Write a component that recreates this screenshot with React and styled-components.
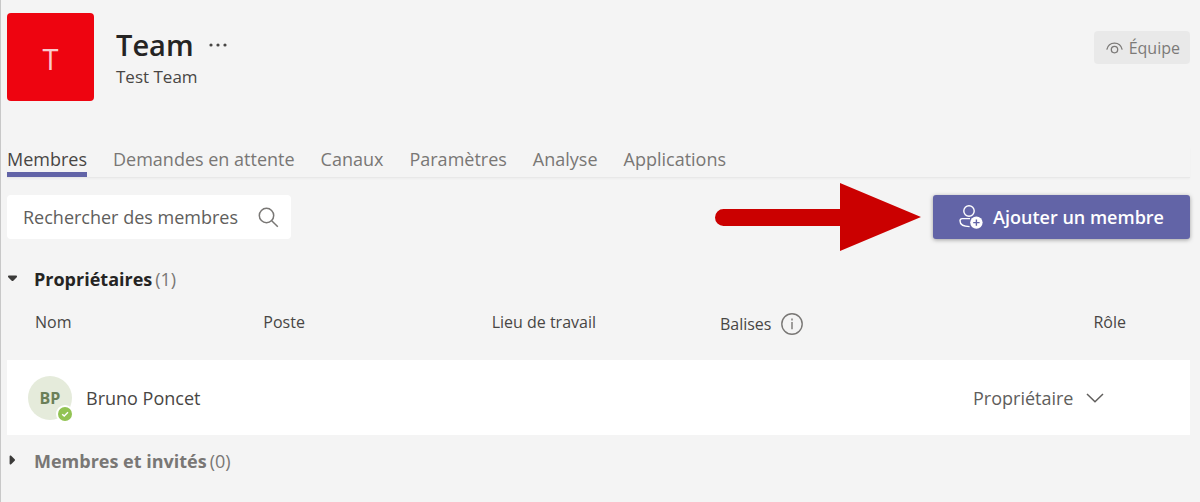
import React from 'react'
import styled, { createGlobalStyle } from 'styled-components'


const GlobalStyle = createGlobalStyle`
*{
box-sizing:border-box;
}
body{
margin:0;
background-color:#f4f4f4;
color:#484644;
font-family:"Open Sans","Noto Sans",sans-serif;
font-size:18px;
line-height:24px;
}
button,input,select{
font:inherit;
color:inherit;
border:none;
padding:0;
margin:0;
}
`;

const Page = styled.main`
min-height:100vh;
border-left:1px solid #c8c8c8;
padding:13px 10px 0 6px;
`;

const Header = styled.header`
display:flex;
gap:22px;
`;

const TeamLogo = styled.div`
display:flex;
align-items:center;
justify-content:center;
width:87px;
height:88px;
padding-top:4px;
border-radius:4px;
background-color:#ee0410;
color:#fbc9cc;
font-size:29px;
`;

const TeamInfo = styled.div`
flex:1;
padding-top:12px;
`;

const TitleRow = styled.div`
display:flex;
align-items:center;
gap:14px;
`;

const Title = styled.h1`
margin:0;
font-size:29px;
font-weight:600;
line-height:40px;
color:#252423;
`;

const IconButton = styled.button`
display:flex;
background:none;
color:#484644;
cursor:pointer;
`;

const Subtitle = styled.p`
margin:0;
font-size:17px;
`;

const TeamType = styled.button`
display:flex;
align-items:center;
align-self:flex-start;
gap:6px;
height:33px;
margin-top:18px;
padding:0 10px 0 12px;
border-radius:4px;
background-color:#e9e9e9;
color:#7c7a78;
font-size:16px;
`;

const Tabs = styled.nav`
display:flex;
gap:26px;
margin-top:46px;
border-bottom:1px solid #e8e8e8;
box-shadow:0 1px 2px rgba(0,0,0,0.03);
`;

const Tab = styled.a`
padding-bottom:${(props) => (props.$active ? '1px' : '6px')};
border-bottom:${(props) => (props.$active ? '5px solid #6264a7' : 'none')};
color:${(props) => (props.$active ? '#484644' : '#797775')};
text-decoration:none;
`;

const Toolbar = styled.div`
display:flex;
align-items:center;
gap:12px;
padding-top:5px;
`;

const Search = styled.label`
display:flex;
align-items:center;
justify-content:space-between;
width:284px;
height:44px;
margin-right:auto;
padding:0 12px 0 16px;
border-radius:4px;
background-color:#fff;
color:#797775;
`;

const SearchInput = styled.input`
flex:1;
min-width:0;
background:none;
outline:none;

&::placeholder{
color:#605e5c;
opacity:1;
}
`;

const AddButton = styled.button`
display:flex;
align-items:center;
gap:10px;
height:44px;
padding:0 26px;
border-radius:3px;
background-color:#6264a7;
box-shadow:0 1px 4px rgba(0,0,0,0.35);
color:#fff;
font-weight:600;
cursor:pointer;
`;

const GroupHeading = styled.h2`
display:flex;
align-items:center;
margin:0;
font-size:18px;
font-weight:400;
color:#797775;
`;

const GroupToggle = styled.button`
display:flex;
align-items:center;
gap:15px;
margin-right:3px;
background:none;
color:${(props) => (props.$open ? '#252423' : '#797775')};
font-weight:700;
cursor:pointer;
`;

const Group = styled.section`
padding-top:${(props) => (props.$first ? '16px' : '14px')};
`;

const Table = styled.table`
width:100%;
margin-top:12px;
border-collapse:collapse;
table-layout:fixed;
`;

const HeadCell = styled.th`
width:${(props) => props.$width};
height:57px;
padding:${(props) => (props.$end ? '7px 64px 0 0' : '7px 0 0 28px')};
font-size:16px;
font-weight:400;
text-align:${(props) => (props.$end ? 'right' : 'left')};
vertical-align:top;
`;

const HeadLabel = styled.span`
display:flex;
align-items:center;
gap:10px;
padding-top:2px;

svg{
color:#797775;
}
`;

const Cell = styled.td`
height:75px;
padding:${(props) => (props.$end ? '0 86px 0 0' : '0 0 0 21px')};
background-color:#fff;
`;

const Member = styled.div`
display:flex;
align-items:center;
gap:14px;
white-space:nowrap;
`;

const Avatar = styled.div`
position:relative;
display:flex;
align-items:center;
justify-content:center;
width:44px;
height:44px;
border-radius:50%;
background-color:#e5ebdb;
color:#6b7f57;
font-size:16px;
font-weight:700;
`;

const Presence = styled.svg`
position:absolute;
right:-2px;
bottom:-3px;
`;

const RolePicker = styled.div`
display:flex;
align-items:center;
justify-content:flex-end;
gap:12px;
color:#605e5c;
`;

const RoleSelect = styled.select`
appearance:none;
background:none;
`;

const tabs = ['Membres', 'Demandes en attente', 'Canaux', 'Paramètres', 'Analyse', 'Applications']

const MoreIcon = () => (
  <svg width="20" height="6" viewBox="0 0 20 6" fill="currentColor">
    <circle cx="3" cy="3" r="1.6" />
    <circle cx="10" cy="3" r="1.6" />
    <circle cx="17" cy="3" r="1.6" />
  </svg>
)

const EyeIcon = () => (
  <svg width="17" height="12" viewBox="0 0 17 12" fill="none" stroke="currentColor" strokeWidth="1.3">
    <path d="M0.8 7.6C1.8 3.6 4.8 1.2 8.5 1.2s6.7 2.4 7.7 6.4" />
    <circle cx="8.5" cy="7.6" r="3.2" />
  </svg>
)

const SearchIcon = () => (
  <svg width="21" height="21" viewBox="0 0 21 21" fill="none" stroke="currentColor" strokeWidth="1.5">
    <circle cx="8.5" cy="8.5" r="7.2" />
    <path d="M13.7 13.7l6.1 6.1" />
  </svg>
)

const Arrow = () => (
  <svg width="206" height="68" viewBox="0 0 206 68" fill="#cb0000">
    <path d="M8.5 26H125V0l81 34-81 34V43H8.5a8.5 8.5 0 0 1 0-17z" />
  </svg>
)

const AddMemberIcon = () => (
  <svg width="24" height="24" viewBox="0 0 24 24" fill="none" stroke="currentColor" strokeWidth="1.4">
    <circle cx="10" cy="6" r="5.2" />
    <path d="M11 13.6H3.2a2.2 2.2 0 0 0-2.2 2.2c0 3.6 3.6 5.8 9.6 5.8" />
    <circle cx="17.4" cy="17.6" r="6.2" fill="currentColor" stroke="none" />
    <path d="M17.4 14.4v6.4M14.2 17.6h6.4" stroke="#6264a7" />
  </svg>
)

const Caret = ({ open }) => (
  <svg width="12" height="12" viewBox="0 0 12 12" fill="#3b3a39">
    {open ? <path d="M1.8 2.6h7.4q.8 0 .8.8v.5L6.3 7.7q-.8.7-1.6 0L1 3.9v-.5q0-.8.8-.8z" />
      : <path d="M2.6 1.2v7.6q0 .8.8.8h.5l3.8-3.8q.7-.8 0-1.6L3.9.6h-.5q-.8 0-.8.6z" />}
  </svg>
)

const InfoIcon = () => (
  <svg width="22" height="22" viewBox="0 0 22 22" fill="none" stroke="currentColor" strokeWidth="1.4">
    <circle cx="11" cy="11" r="10.2" />
    <path d="M11 9v7.2M11 5.6v1.8" />
  </svg>
)

const ChevronIcon = () => (
  <svg width="18" height="10" viewBox="0 0 18 10" fill="none" stroke="currentColor" strokeWidth="1.5">
    <path d="M1 1l8 7.8L17 1" />
  </svg>
)

const PresenceIcon = () => (
  <Presence width="18" height="18" viewBox="0 0 18 18">
    <circle cx="9" cy="9" r="9" fill="#fff" />
    <circle cx="9" cy="9" r="7" fill="#92c353" />
    <path d="M6.2 9.2l2 1.9 3.8-3.8" fill="none" stroke="#fff" strokeWidth="1.4" />
  </Presence>
)


const App = () => {
  return (
    <Page>
      <GlobalStyle />
      <Header>
        <TeamLogo>T</TeamLogo>
        <TeamInfo>
          <TitleRow>
            <Title>Team</Title>
            <IconButton aria-label="Plus d’options"><MoreIcon /></IconButton>
          </TitleRow>
          <Subtitle>Test Team</Subtitle>
        </TeamInfo>
        <TeamType><EyeIcon />Équipe</TeamType>
      </Header>

      <Tabs>
        {tabs.map((tab, i) => (
          <Tab key={tab} href="#" $active={i === 0}>{tab}</Tab>
        ))}
      </Tabs>

      <Toolbar>
        <Search>
          <SearchInput type="text" aria-label="Rechercher des membres" placeholder="Rechercher des membres" />
          <SearchIcon />
        </Search>
        <Arrow />
        <AddButton><AddMemberIcon />Ajouter un membre</AddButton>
      </Toolbar>

      <Group $first>
        <GroupHeading>
          <GroupToggle $open><Caret open />Propriétaires</GroupToggle>(1)
        </GroupHeading>
        <Table>
          <thead>
            <tr>
              <HeadCell $width="19.3%">Nom</HeadCell>
              <HeadCell $width="19.3%">Poste</HeadCell>
              <HeadCell $width="19.3%">Lieu de travail</HeadCell>
              <HeadCell $width="19.3%"><HeadLabel>Balises <InfoIcon /></HeadLabel></HeadCell>
              <HeadCell $end>Rôle</HeadCell>
            </tr>
          </thead>
          <tbody>
            <tr>
              <Cell>
                <Member>
                  <Avatar>BP<PresenceIcon /></Avatar>
                  Bruno Poncet
                </Member>
              </Cell>
              <Cell />
              <Cell />
              <Cell />
              <Cell $end>
                <RolePicker>
                  <RoleSelect aria-label="Rôle">
                    <option>Propriétaire</option>
                  </RoleSelect>
                  <ChevronIcon />
                </RolePicker>
              </Cell>
            </tr>
          </tbody>
        </Table>
      </Group>

      <Group>
        <GroupHeading>
          <GroupToggle><Caret />Membres et invités</GroupToggle>(0)
        </GroupHeading>
      </Group>
    </Page>
  )
}

export default App
